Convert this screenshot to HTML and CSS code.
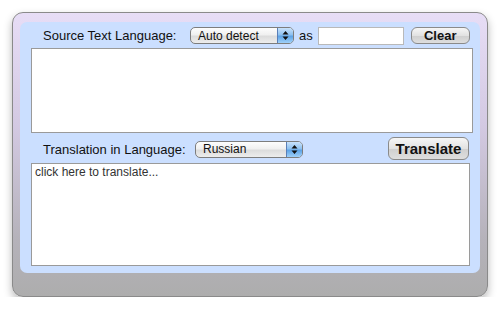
FILE: index.html
```html
<!DOCTYPE html>
<html lang="en">
<head>
  <meta charset="UTF-8">
  <title>Translator</title>
  <link rel="stylesheet" href="styles.css">
</head>
<body>
  <div class="frame">
    <div class="panel">
      <div class="row row-top">
        <span class="label label-src">Source Text Language:</span>
        <div class="select select-src">
          <span class="select-text">Auto detect</span>
          <span class="select-arrow">
            <svg width="7" height="11" viewBox="0 0 7 11"><path d="M3.5 1 L6.5 4.5 H0.5 Z M3.5 10 L6.5 6.5 H0.5 Z" fill="#111"/></svg>
          </span>
        </div>
        <span class="as">as</span>
        <input type="text" class="as-input">
        <button class="btn btn-clear">Clear</button>
      </div>
      <textarea class="box box-src"></textarea>
      <div class="row row-mid">
        <span class="label label-dst">Translation in Language:</span>
        <div class="select select-dst">
          <span class="select-text">Russian</span>
          <span class="select-arrow">
            <svg width="7" height="11" viewBox="0 0 7 11"><path d="M3.5 1 L6.5 4.5 H0.5 Z M3.5 10 L6.5 6.5 H0.5 Z" fill="#111"/></svg>
          </span>
        </div>
        <button class="btn btn-translate">Translate</button>
      </div>
      <div class="box box-dst">click here to translate...</div>
    </div>
  </div>
</body>
</html>
```
FILE: styles.css
```css
* {
  box-sizing: border-box;
}
body {
  margin: 0;
  background: #fff;
  font-family: "Liberation Sans", Arial, sans-serif;
}
.frame {
  margin: 12px 0 0 12px;
  width: 476px;
  height: 285px;
  padding: 9px 7px 23px 7px;
  border: 1px solid #8a8a8a;
  border-radius: 11px;
  background: linear-gradient(to bottom, #e7ddf6 0%, #d3c9e2 40%, #b5b2ba 80%, #adadad 100%);
  box-shadow: 0 4px 8px rgba(0,0,0,0.28);
}
.panel {
  width: 460px;
  height: 251px;
  background: #cbdfff;
  border-radius: 7px;
  padding: 0 7px 7px 11px;
  display: flex;
  flex-direction: column;
}
.row {
  display: flex;
  align-items: center;
}
.row-top {
  height: 26px;
  padding-top: 1px;
}
.row-mid {
  height: 30px;
  padding-top: 2px;
}
.label {
  font-size: 13px;
  color: #111;
  margin-left: 12px;
}
.label-src {
  width: 147px;
}
.label-dst {
  width: 152px;
}
.select {
  height: 17px;
  border: 1px solid #7d7d7d;
  border-radius: 5px;
  background: linear-gradient(to bottom, #fdfdfd 0%, #f0f0f0 45%, #dcdcdc 55%, #ededed 100%);
  display: flex;
  align-items: center;
  overflow: hidden;
}
.select-src {
  width: 104px;
}
.select-dst {
  width: 108px;
}
.select-text {
  flex: 1;
  font-size: 12px;
  padding-left: 7px;
  color: #111;
}
.select-arrow {
  width: 16px;
  height: 100%;
  display: flex;
  align-items: center;
  justify-content: center;
  border-left: 1px solid #5a7fb8;
  background: linear-gradient(to bottom, #c9e2fb 0%, #8ec1f0 45%, #5da3e6 55%, #9fd0f8 100%);
}
.as {
  font-size: 13px;
  color: #111;
  margin: 0 5px 0 5px;
}
.as-input {
  width: 86px;
  height: 18px;
  border: 1px solid #b9b9b9;
  background: #fff;
  padding: 0;
}
.btn {
  font-family: "Liberation Sans", Arial, sans-serif;
  font-weight: bold;
  color: #111;
  border: 1px solid #8a8a8a;
  border-radius: 6px;
  background: linear-gradient(to bottom, #f6f6f6 0%, #e2e2e2 50%, #cfcfcf 52%, #dedede 100%);
  padding: 0;
}
.btn-clear {
  width: 59px;
  height: 17px;
  font-size: 13px;
  margin-left: 7px;
  line-height: 15px;
}
.btn-translate {
  width: 81px;
  height: 23px;
  font-size: 15px;
  margin-left: auto;
  margin-right: 4px;
  margin-top: -2px;
}
.box {
  display: block;
  border: 1px solid #9a9a9a;
  background: #fff;
  margin: 0;
  resize: none;
}
.box-src {
  width: 442px;
  height: 85px;
}
.box-dst {
  width: 439px;
  height: 103px;
  font-size: 12px;
  color: #333;
  padding: 1px 3px;
}
```
